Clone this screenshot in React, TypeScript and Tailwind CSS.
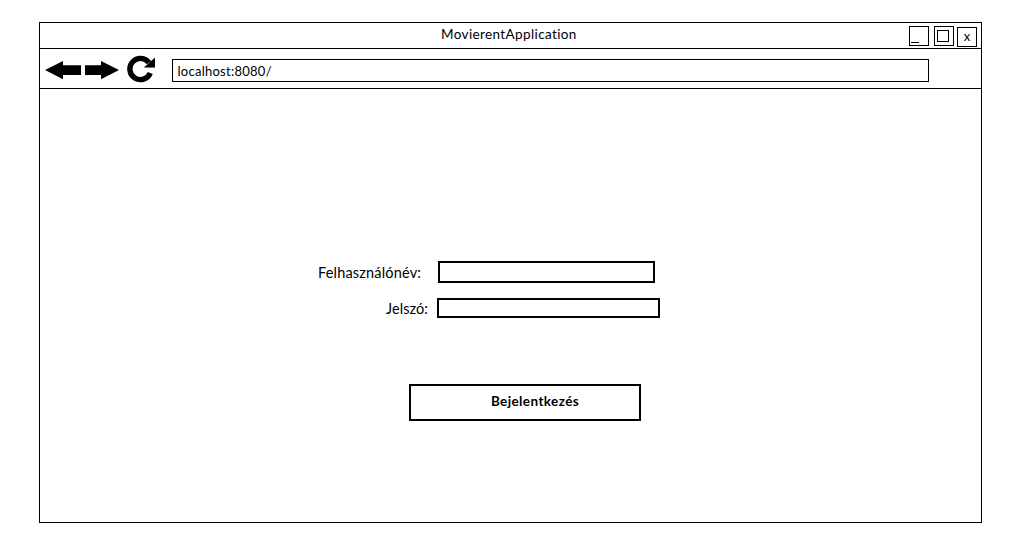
import React from "react";

function BackArrow() {
  return (
    <svg width="36" height="20" viewBox="0 0 36 20" className="block" fill="#000">
      <path d="M0 10 18 1V5.2H36V15H18V19.2Z" />
    </svg>
  );
}

function ForwardArrow() {
  return (
    <svg width="34" height="20" viewBox="0 0 34 20" className="block" fill="#000">
      <path d="M34 10 16 1V5.2H0V15H16V19.2Z" />
    </svg>
  );
}

function Reload() {
  return (
    <svg width="30" height="28" viewBox="0 0 30 28" className="block">
      <path d="M23 7.7A10.6 10.6 0 1 0 24.3 18" fill="none" stroke="#000" strokeWidth="5.4" />
      <path d="M29 2.5V12H18.3L21.3 9.4L24.8 6.2Z" fill="#000" />
      <path d="M18.3 12.5H29" stroke="#777" strokeWidth="1" />
    </svg>
  );
}

function TitleBar() {
  return (
    <header className="flex h-[26px] border-b border-black">
      <div className="ml-[401px] w-[468px] pt-[2px] text-[13.5px] leading-[18px] tracking-[0.38px]">
        MovierentApplication
      </div>
      <div className="flex items-start pt-[3px]">
        <button className="flex h-5 w-5 items-end border border-black pb-[2px] pl-[1px]">
          <span className="h-px w-2 bg-black" />
        </button>
        <button className="ml-[5px] flex h-5 w-5 items-start border border-black pt-[3px] pl-[2px]">
          <span className="block h-3 w-3 border border-black" />
        </button>
        <button className="mt-px ml-[3px] flex h-5 w-5 justify-center border border-black text-[13px] leading-[17px]">
          x
        </button>
      </div>
    </header>
  );
}

function Toolbar() {
  return (
    <nav className="flex h-10 items-start border-b border-black pl-[5px]">
      <div className="mt-[11px]"><BackArrow /></div>
      <div className="mt-[11px] ml-1"><ForwardArrow /></div>
      <div className="mt-[6px] ml-[7px]"><Reload /></div>
      <div className="mt-[10px] ml-4 h-[23px] w-[757px] border border-black pl-[4.5px] text-[13px] leading-[22px] tracking-[0.26px]">
        localhost:8080/
      </div>
    </nav>
  );
}

export default function App() {
  return (
    <div className="h-[547px] w-[1026px] bg-white pt-[22px] pl-[39px] font-['Lato','Open_Sans',sans-serif] text-black">
      <div className="h-[501px] w-[943px] border border-black">
        <TitleBar />
        <Toolbar />
        <form className="flex flex-col items-start pt-[172px]">
          <div className="flex items-start">
            <label className="ml-[278px] w-[120px] text-[14.5px] leading-6 tracking-[0.18px]">Felhasználónév:</label>
            <input className="h-[22px] w-[217px] border-2 border-black outline-none" />
          </div>
          <div className="mt-[13px] flex items-start">
            <label className="ml-[346px] w-[51px] text-[14.5px] leading-[22px] tracking-[0.08px]">Jelszó:</label>
            <input type="password" className="h-5 w-[223px] border-2 border-black outline-none" />
          </div>
          <button type="button" className="mt-[64px] ml-[369px] h-[37px] w-[232px] border-2 border-black pb-[2px] pl-5 text-[13.5px] leading-[31px] font-bold tracking-[0.4px]">
            Bejelentkezés
          </button>
        </form>
      </div>
    </div>
  );
}
